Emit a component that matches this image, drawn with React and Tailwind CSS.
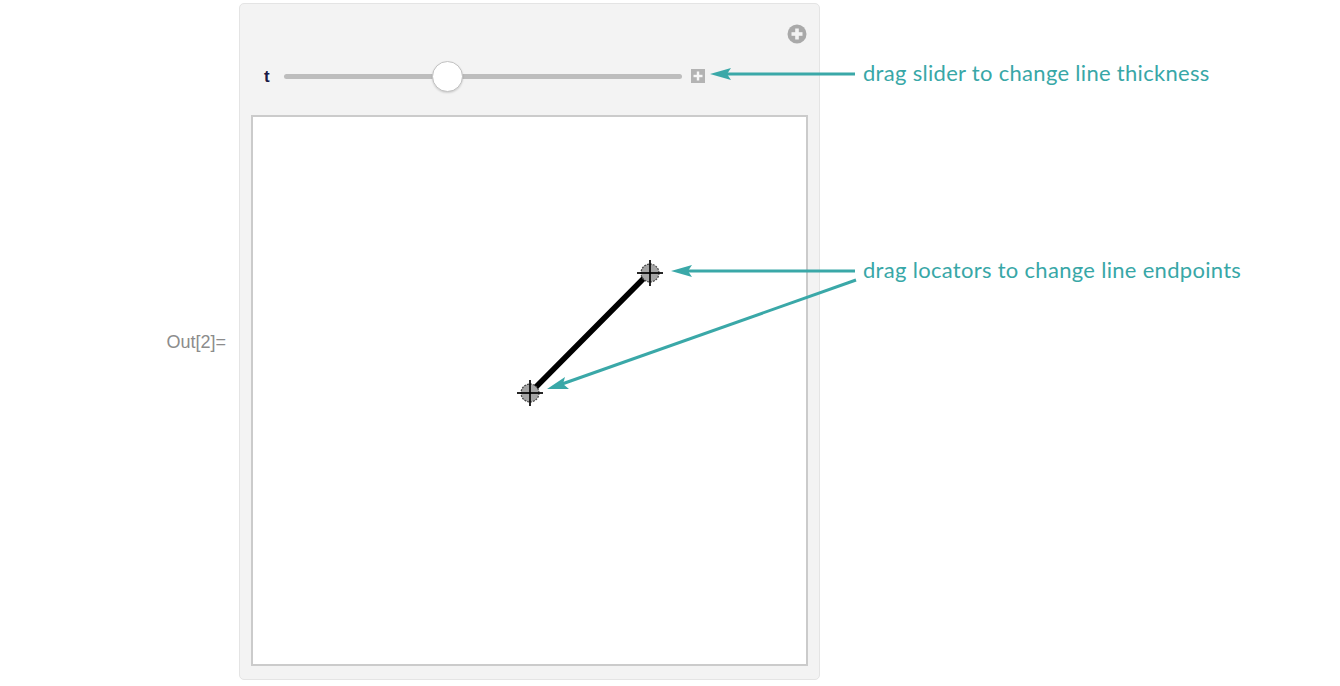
import React from "react";

function Locator({ x, y }) {
  return (
    <g>
      <circle cx={x} cy={y} r="9" fill="#a5a5a5" stroke="#444" strokeWidth="1.2" strokeDasharray="2 1" />
      <line x1={x - 13} y1={y} x2={x + 13} y2={y} stroke="#000" strokeWidth="1.7" />
      <line x1={x} y1={y - 13} x2={x} y2={y + 13} stroke="#000" strokeWidth="1.7" />
    </g>
  );
}

export default function App() {
  return (
    <div className="relative w-[1340px] h-[686px] bg-white overflow-hidden" style={{ fontFamily: '"Liberation Sans", Arial, sans-serif' }}>
      <div className="flex pt-[3px]">
        <div className="w-[239px] h-[677px] flex items-center justify-end pr-[13px]">
          <span className="text-[18px] leading-none text-[#8c8c8c]">Out[2]=</span>
        </div>
        <div className="w-[581px] h-[677px] bg-[#f3f3f3] border border-[#e4e4e4] rounded-[5px] flex flex-col px-[11px]">
          <div className="flex justify-end pt-[20px] pr-[1px]">
            <svg width="20" height="20" viewBox="0 0 20 20">
              <circle cx="10" cy="10" r="9.5" fill="#a9a9a9" />
              <rect x="4.5" y="8.2" width="11" height="3.6" fill="#f3f3f3" />
              <rect x="8.2" y="4.5" width="3.6" height="11" fill="#f3f3f3" />
            </svg>
          </div>
          <div className="flex items-center h-[32px] mt-[16px] pl-[13px]">
            <span className="w-[20px] text-[17px] leading-none font-semibold text-[#1a1a45]">t</span>
            <div className="relative w-[398px] h-[5px] rounded-full bg-[#bdbdbd]">
              <div className="absolute left-[148px] top-[-13px] w-[31px] h-[31px] rounded-full bg-white border border-[#c2c2c2] shadow-[0_1px_2px_rgba(0,0,0,0.15)]" />
            </div>
            <div className="ml-[9px] w-[14px] h-[14px] bg-[#b3b3b3] flex items-center justify-center">
              <svg width="10" height="10" viewBox="0 0 10 10">
                <rect x="0.5" y="3.8" width="9" height="2.4" fill="#f7f7f7" />
                <rect x="3.8" y="0.5" width="2.4" height="9" fill="#f7f7f7" />
              </svg>
            </div>
          </div>
          <div className="mt-[23px] w-[557px] h-[551px] bg-white border-2 border-[#cbcbcb]">
            <svg width="553" height="547" viewBox="2 2 553 547">
              <line x1="279" y1="278" x2="399" y2="157" stroke="#000" strokeWidth="5.5" strokeLinecap="round" />
              <Locator x={279} y={278} />
              <Locator x={399} y={158} />
            </svg>
          </div>
        </div>
      </div>

      <svg className="absolute top-0 left-0 pointer-events-none" width="1340" height="686">
        <line x1="855" y1="74" x2="725" y2="74" stroke="#3aa8a8" strokeWidth="3" />
        <polygon points="710,74 731,68 727,74 731,80" fill="#3aa8a8" />
        <line x1="855" y1="271" x2="686" y2="271" stroke="#3aa8a8" strokeWidth="3" />
        <polygon points="671,271 692,265 688,271 692,277" fill="#3aa8a8" />
        <line x1="856" y1="280" x2="562" y2="384" stroke="#3aa8a8" strokeWidth="3" />
        <polygon points="547,389 565,377 563,384 569,389" fill="#3aa8a8" />
      </svg>

      <div className="absolute left-[863px] top-[58px] text-[22px] tracking-[0.3px] leading-[30px] text-[#38a7a7]" style={{ fontFamily: 'Lato, "Open Sans", sans-serif' }}>
        drag slider to change line thickness
      </div>
      <div className="absolute left-[863px] top-[255px] text-[22px] tracking-[0.3px] leading-[30px] text-[#38a7a7]" style={{ fontFamily: 'Lato, "Open Sans", sans-serif' }}>
        drag locators to change line endpoints
      </div>
    </div>
  );
}
